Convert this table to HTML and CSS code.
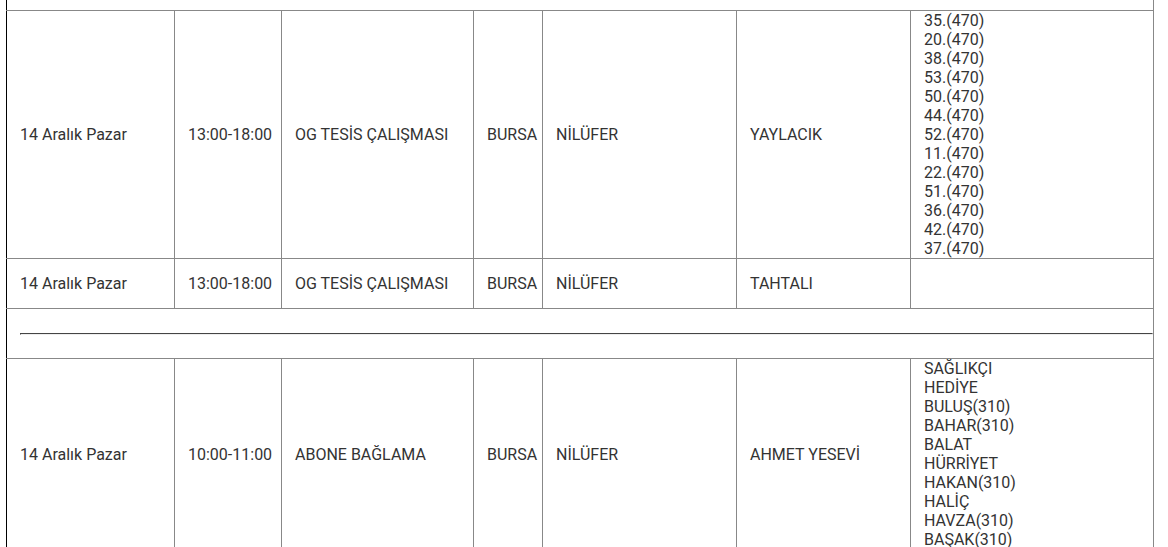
FILE: index.html
```html
<!DOCTYPE html>
<html lang="tr">
<head>
<meta charset="utf-8">
<title>Planlı Kesintiler</title>
<link rel="stylesheet" href="styles.css">
</head>
<body>
<div class="wrap">
<table class="outages">
  <colgroup>
    <col class="c-date"><col class="c-time"><col class="c-reason"><col class="c-city"><col class="c-district"><col class="c-area"><col class="c-streets">
  </colgroup>
  <tbody>
    <tr class="cut"><td colspan="7"></td></tr>
    <tr>
      <td>14 Aralık Pazar</td>
      <td>13:00-18:00</td>
      <td>OG TESİS ÇALIŞMASI</td>
      <td>BURSA</td>
      <td>NİLÜFER</td>
      <td>YAYLACIK</td>
      <td class="streets">35.(470)<br>20.(470)<br>38.(470)<br>53.(470)<br>50.(470)<br>44.(470)<br>52.(470)<br>11.(470)<br>22.(470)<br>51.(470)<br>36.(470)<br>42.(470)<br>37.(470)</td>
    </tr>
    <tr>
      <td>14 Aralık Pazar</td>
      <td>13:00-18:00</td>
      <td>OG TESİS ÇALIŞMASI</td>
      <td>BURSA</td>
      <td>NİLÜFER</td>
      <td>TAHTALI</td>
      <td class="streets"></td>
    </tr>
    <tr class="sep"><td colspan="7"><hr></td></tr>
    <tr>
      <td>14 Aralık Pazar</td>
      <td>10:00-11:00</td>
      <td>ABONE BAĞLAMA</td>
      <td>BURSA</td>
      <td>NİLÜFER</td>
      <td>AHMET YESEVİ</td>
      <td class="streets">SAĞLIKÇI<br>HEDİYE<br>BULUŞ(310)<br>BAHAR(310)<br>BALAT<br>HÜRRİYET<br>HAKAN(310)<br>HALİÇ<br>HAVZA(310)<br>BAŞAK(310)</td>
    </tr>
  </tbody>
</table>
</div>
</body>
</html>
```
FILE: styles.css
```css
html, body {
  margin: 0;
  padding: 0;
  background: #fff;
}
.wrap {
  padding-left: 6px;
}
.outages {
  border-collapse: collapse;
  table-layout: fixed;
  width: 1148px;
  font-family: Roboto, "Liberation Sans", Arial, sans-serif;
  font-size: 16px;
  line-height: 19px;
  color: #333;
}
.c-date { width: 168px; }
.c-time { width: 107px; }
.c-reason { width: 192px; }
.c-city { width: 69px; }
.c-district { width: 194px; }
.c-area { width: 174px; }
.c-streets { width: 243px; }
.outages td {
  border: 1px solid #888;
  padding: 0 0 0 13px;
  height: 49px;
  vertical-align: middle;
  text-align: left;
  white-space: nowrap;
}
.outages td:first-child {
  border-left-color: #000;
}
.outages tr.cut td {
  border-top: none;
  height: 10px;
}
.outages tr.sep td {
  padding-right: 0;
}
.outages hr {
  margin: 0;
  border: 1px inset #eee;
  border-top-color: #999;
  border-left-color: #999;
  height: 0;
}
```
